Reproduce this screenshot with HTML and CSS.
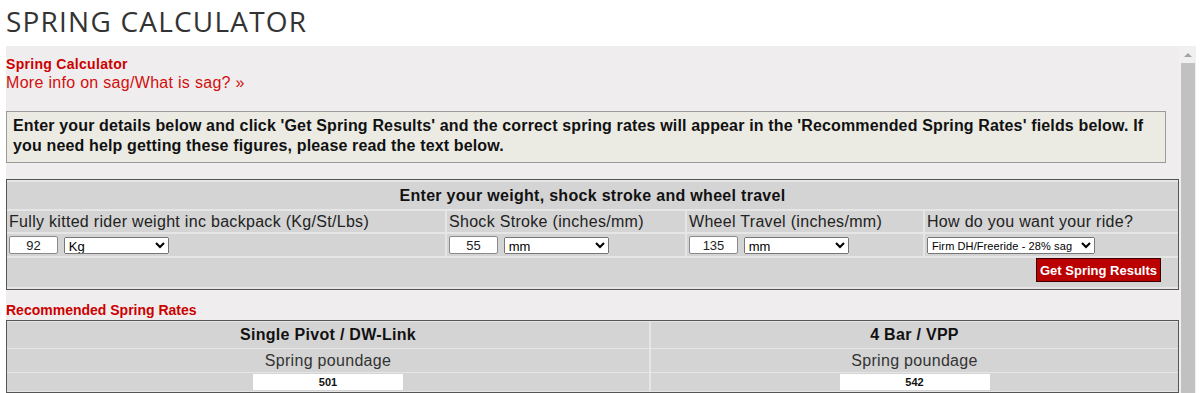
FILE: index.html
```html
<!DOCTYPE html>
<html lang="en">
<head>
    <meta charset="UTF-8">
    <title>Spring Calculator</title>
    <link rel="stylesheet" href="styles.css">
</head>
<body>
    <h1 class="page-title">SPRING CALCULATOR</h1>

    <div class="frame">
        <div class="frame-content">
            <div class="calc-title">Spring Calculator</div>
            <a class="sag-link" href="#">More info on sag/What is sag? &raquo;</a>

            <div class="note">
                Enter your details below and click 'Get Spring Results' and the correct spring rates will appear in the 'Recommended Spring Rates' fields below. If you need help getting these figures, please read the text below.
            </div>

            <table class="calc-table">
                <tr>
                    <th colspan="4" class="head-cell">Enter your weight, shock stroke and wheel travel</th>
                </tr>
                <tr class="label-row">
                    <td class="col-weight">Fully kitted rider weight inc backpack (Kg/St/Lbs)</td>
                    <td class="col-stroke">Shock Stroke (inches/mm)</td>
                    <td class="col-travel">Wheel Travel (inches/mm)</td>
                    <td>How do you want your ride?</td>
                </tr>
                <tr class="input-row">
                    <td>
                        <input class="num-input" type="text" value="92">
                        <select class="unit-select"><option>Kg</option><option>St</option><option>Lbs</option></select>
                    </td>
                    <td>
                        <input class="num-input" type="text" value="55">
                        <select class="unit-select"><option>mm</option><option>inches</option></select>
                    </td>
                    <td>
                        <input class="num-input" type="text" value="135">
                        <select class="unit-select"><option>mm</option><option>inches</option></select>
                    </td>
                    <td>
                        <select class="ride-select"><option>Firm DH/Freeride - 28% sag</option></select>
                    </td>
                </tr>
                <tr class="button-row">
                    <td colspan="4"><button class="results-btn" type="button">Get Spring Results</button></td>
                </tr>
            </table>

            <div class="rates-title">Recommended Spring Rates</div>

            <table class="rates-table">
                <tr>
                    <th class="rates-head rates-left">Single Pivot / DW-Link</th>
                    <th class="rates-head">4 Bar / VPP</th>
                </tr>
                <tr class="rates-label">
                    <td>Spring poundage</td>
                    <td>Spring poundage</td>
                </tr>
                <tr class="rates-value">
                    <td><input class="result-box" type="text" value="501" readonly></td>
                    <td><input class="result-box" type="text" value="542" readonly></td>
                </tr>
            </table>
        </div>

        <div class="scrollbar">
            <div class="scroll-arrow"></div>
            <div class="scroll-thumb"></div>
        </div>
    </div>
</body>
</html>
```

FILE: styles.css
```css
body {
    margin: 0;
    font-family: "Liberation Sans", Arial, sans-serif;
    color: #222;
    background: #fff;
    height: 393px;
    overflow: hidden;
}

.page-title {
    margin: 0;
    padding: 3px 0 0 6px;
    height: 43px;
    box-sizing: border-box;
    font-family: "Open Sans", sans-serif;
    font-weight: 400;
    font-size: 28px;
    line-height: 36px;
    letter-spacing: 1.2px;
    color: #333;
}

.frame {
    display: flex;
    margin: 3px 4px 0 6px;
    height: 360px;
    background: #efeded;
    letter-spacing: 0.3px;
}

.frame-content {
    flex: 1;
    padding-top: 10px;
}

.calc-title {
    color: #cc0000;
    font-weight: bold;
    font-size: 14px;
    line-height: 17px;
}

.sag-link {
    display: block;
    color: #d10f0f;
    text-decoration: none;
    font-size: 16px;
    line-height: 19px;
}

.note {
    margin: 19px 13px 0 0;
    padding: 4px 3px 6px 6px;
    border: 1px solid #9a9a9a;
    background: #ebebe4;
    font-weight: bold;
    font-size: 16px;
    line-height: 20px;
    letter-spacing: 0.15px;
    color: #111;
}

/* form table */
.calc-table {
    width: 100%;
    margin-top: 16px;
    border: 1px solid #555;
    border-spacing: 0 2px;
    background: #e6e6e6;
    font-size: 16px;
}

.calc-table td, .calc-table th {
    background: #d4d4d4;
    padding: 0 2px;
}

.calc-table td + td {
    border-left: 2px solid #e6e6e6;
}

.head-cell {
    height: 27px;
    font-size: 16px;
    color: #111;
}

.label-row td {
    height: 21px;
    color: #222;
}

.input-row td {
    height: 22px;
    white-space: nowrap;
}

.col-weight {
    width: 434px;
}

.col-stroke {
    width: 234px;
}

.col-travel {
    width: 232px;
}

.num-input {
    width: 49px;
    height: 18px;
    box-sizing: border-box;
    border: 1px solid #8a8a8a;
    border-radius: 2px;
    padding: 0 4px;
    text-align: center;
    font-family: "Liberation Sans", Arial, sans-serif;
    font-size: 13px;
    color: #222;
    vertical-align: middle;
}

.unit-select {
    width: 105px;
    height: 17px;
    margin-left: 1px;
    font-family: "Liberation Sans", Arial, sans-serif;
    font-size: 13px;
    vertical-align: middle;
}

.ride-select {
    width: 168px;
    height: 17px;
    padding: 0;
    font-family: "Liberation Sans", Arial, sans-serif;
    font-size: 11px;
    letter-spacing: 0.1px;
    vertical-align: middle;
}

.button-row td {
    height: 29px;
    text-align: right;
    vertical-align: top;
    padding-right: 17px;
}

.results-btn {
    width: 125px;
    height: 24px;
    border: 1px solid #3a0000;
    background: #bb0000;
    color: #fff;
    font-family: "Liberation Sans", Arial, sans-serif;
    font-weight: bold;
    font-size: 13px;
    letter-spacing: 0;
    padding: 0;
}

.rates-title {
    margin-top: 12px;
    color: #cc0000;
    font-weight: bold;
    font-size: 14px;
    line-height: 17px;
    letter-spacing: 0;
}

/* results table */
.rates-table {
    width: 100%;
    margin-top: 1px;
    border: 1px solid #555;
    border-spacing: 0 1px;
    background: #e6e6e6;
    font-size: 16px;
    text-align: center;
}

.rates-table td, .rates-table th {
    background: #d4d4d4;
    padding: 0;
}

.rates-left {
    width: 642px;
}

.rates-table td + td, .rates-table th + th {
    border-left: 2px solid #e6e6e6;
}

.rates-head {
    height: 26px;
    color: #111;
}

.rates-label td {
    height: 23px;
    color: #333;
}

.rates-value td {
    height: 18px;
}

.result-box {
    display: block;
    margin: 0 auto;
    width: 150px;
    height: 16px;
    box-sizing: border-box;
    border: none;
    background: #fff;
    text-align: center;
    font-family: "Liberation Sans", Arial, sans-serif;
    font-weight: bold;
    font-size: 11px;
    color: #111;
}

/* fake frame scrollbar */
.scrollbar {
    width: 17px;
    background: #f0f0f0;
    display: flex;
    flex-direction: column;
    align-items: center;
}

.scroll-arrow {
    margin-top: 7px;
    width: 0;
    height: 0;
    border-left: 4px solid transparent;
    border-right: 4px solid transparent;
    border-bottom: 4px solid #a3a3a3;
}

.scroll-thumb {
    margin-top: 6px;
    width: 14px;
    flex: 1;
    background: #c1c1c1;
}
```
